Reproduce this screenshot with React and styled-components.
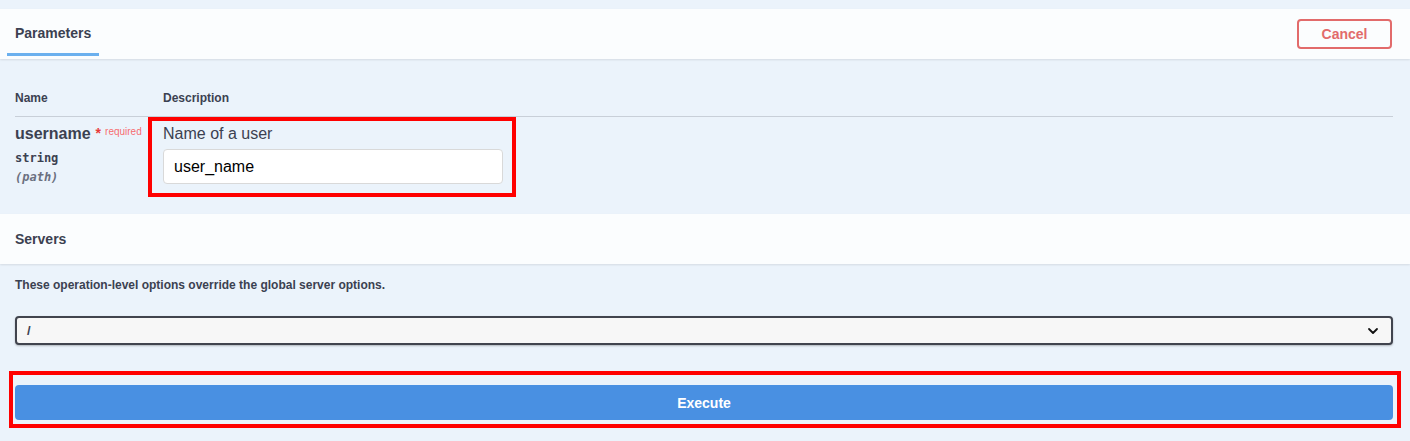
import React from 'react';
import styled, { createGlobalStyle } from 'styled-components';

const Global = createGlobalStyle`
    body {
        margin: 0;
        background: #ebf3fb;
        font-family: "Liberation Sans", Arial, sans-serif;
        color: #3b4151;
    }
`

const Page = styled.div`
    padding-top: 9px;
    width: 1410px;
`

const SectionHeader = styled.div`
    display: flex;
    align-items: stretch;
    justify-content: space-between;
    height: 50px;
    padding: 0 18px 0 7px;
    background: #fbfdfe;
    box-shadow: 0 1px 2px rgba(0, 0, 0, 0.1);
    box-sizing: border-box;
`

const Tab = styled.div`
    display: flex;
    align-items: center;
    padding: 4px 8px 0;
    margin-bottom: 3px;
    border-bottom: 3px solid #6bb0ee;
    font-size: 14px;
    font-weight: bold;
    color: #3b4151;
`

const Title = styled.div`
    display: flex;
    align-items: center;
    padding-left: 8px;
    font-size: 14px;
    font-weight: bold;
`

const CancelButton = styled.button`
    align-self: center;
    width: 95px;
    height: 30px;
    margin-top: -1px;
    border: 2px solid #e26b6b;
    border-radius: 4px;
    background: transparent;
    color: #e26b6b;
    font-family: "Liberation Sans", Arial, sans-serif;
    font-size: 14px;
    font-weight: bold;
`

const Body = styled.div`
    padding: 0 17px 0 15px;
`

const HeadRow = styled.div`
    display: flex;
    padding: 32px 0 11px;
    border-bottom: 1px solid rgba(59, 65, 81, 0.2);
    font-size: 12px;
    font-weight: bold;
`

const HeadCell = styled.div`
    width: ${p => p.$w || 'auto'};
`

const Row = styled.div`
    display: flex;
    padding-bottom: 17px;
`

const NameCell = styled.div`
    width: 133px;
    padding-top: 5px;
`

const ParamName = styled.div`
    font-size: 16px;
    font-weight: bold;
    line-height: 20px;
    white-space: nowrap;
`

const Star = styled.span`
    color: #e83a3a;
    font-size: 14px;
    margin-left: 5px;
    vertical-align: 1px;
`

const Required = styled.span`
    color: rgba(255, 0, 0, 0.6);
    margin-left: 4px;
    vertical-align: 4px;
    font-size: 10px;
    font-weight: normal;
`

const ParamType = styled.div`
    margin-top: ${p => (p.$muted ? '-1px' : '4px')};
    font-family: "DejaVu Sans Mono", "Liberation Mono", monospace;
    font-size: 12px;
    font-weight: bold;
    line-height: 20px;
    color: ${p => (p.$muted ? '#6b7080' : '#3b4151')};
    font-style: ${p => (p.$muted ? 'italic' : 'normal')};
`

const Highlight = styled.div`
    border: 4px solid #f00;
    padding: ${p => p.$pad};
`

const DescText = styled.div`
    font-size: 16px;
    line-height: 18px;
    margin-bottom: 6px;
`

const TextInput = styled.input`
    display: block;
    width: 340px;
    height: 35px;
    box-sizing: border-box;
    padding: 0 10px;
    border: 1px solid #d9d9d9;
    border-radius: 4px;
    background: #fff;
    font-family: "Liberation Sans", Arial, sans-serif;
    font-size: 16px;
    color: #000;
`

const Note = styled.div`
    font-size: 12px;
    font-weight: bold;
    line-height: 15px;
    padding: 14px 0 23px;
`

const SelectBox = styled.div`
    display: flex;
    align-items: center;
    justify-content: space-between;
    height: 29px;
    box-sizing: border-box;
    padding: 0 12px 0 10px;
    border: 2px solid #41444e;
    border-radius: 4px;
    background: #f7f7f7;
    box-shadow: 0 1px 2px 0 rgba(0, 0, 0, 0.25);
    font-size: 13px;
    font-weight: bold;
`

const ExecuteWrap = styled(Highlight)`
    margin: 26px 9px 0;
`

const ExecuteButton = styled.button`
    display: block;
    width: 100%;
    height: 35px;
    border: none;
    border-radius: 4px;
    background: #4990e2;
    color: #fff;
    font-family: "Liberation Sans", Arial, sans-serif;
    font-size: 14px;
    font-weight: bold;
`

const Chevron = () => (
    <svg width="12" height="8" viewBox="0 0 12 8">
        <path d="M2 2l4 4 4-4" fill="none" stroke="#111" strokeWidth="1.8" strokeLinecap="round" strokeLinejoin="round" />
    </svg>
)

export default function App() {
    return (
        <Page>
            <Global />
            <SectionHeader>
                <Tab>Parameters</Tab>
                <CancelButton>Cancel</CancelButton>
            </SectionHeader>
            <Body>
                <HeadRow>
                    <HeadCell $w="148px">Name</HeadCell>
                    <HeadCell>Description</HeadCell>
                </HeadRow>
                <Row>
                    <NameCell>
                        <ParamName>username<Star>*</Star><Required>required</Required></ParamName>
                        <ParamType>string</ParamType>
                        <ParamType $muted>(path)</ParamType>
                    </NameCell>
                    <Highlight $pad="4px 9px 9px 11px">
                        <DescText>Name of a user</DescText>
                        <TextInput defaultValue="user_name" />
                    </Highlight>
                </Row>
            </Body>
            <SectionHeader>
                <Title>Servers</Title>
            </SectionHeader>
            <Body>
                <Note>These operation-level options override the global server options.</Note>
                <SelectBox>
                    <span>/</span>
                    <Chevron />
                </SelectBox>
            </Body>
            <ExecuteWrap $pad="10px 4px 4px 2px">
                <ExecuteButton>Execute</ExecuteButton>
            </ExecuteWrap>
        </Page>
    )
}
